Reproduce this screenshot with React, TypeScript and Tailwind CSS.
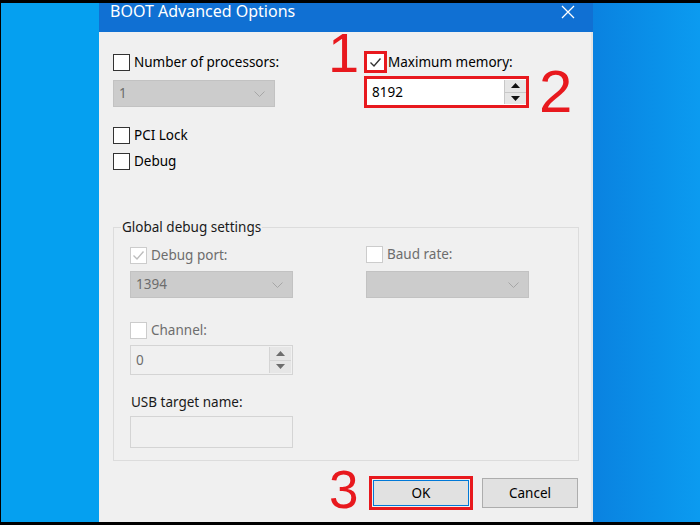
import type { ReactNode } from 'react';

const font = { fontFamily: '"Noto Sans", "Open Sans", sans-serif' };

const Check = ({ color }: { color: string }) => (
  <svg width="13" height="11" viewBox="0 0 13 11" fill="none">
    <path d="M1.5 5.5 L5 9 L11.5 1.5" stroke={color} strokeWidth="1.4" />
  </svg>
);

const Box = ({ checked, disabled }: { checked?: boolean; disabled?: boolean }) => (
  <div
    className={
      'w-[17px] h-[17px] shrink-0 flex items-center justify-center bg-white border ' +
      (disabled ? 'border-[#cccccc]' : 'border-[#333333]')
    }
  >
    {checked && <Check color={disabled ? '#bdbdbd' : '#333'} />}
  </div>
);

const CheckRow = ({ label, checked, disabled }: { label: string; checked?: boolean; disabled?: boolean }) => (
  <div className="flex items-center h-[17px]">
    <Box checked={checked} disabled={disabled} />
    <span className={'ml-[4px] text-[13.5px] leading-[17px] ' + (disabled ? 'text-[#6d6d6d]' : 'text-black')}>
      {label}
    </span>
  </div>
);

const Chevron = () => (
  <svg width="11" height="6" viewBox="0 0 11 6" fill="none">
    <path d="M0.5 0.5 L5.5 5.5 L10.5 0.5" stroke="#a6a6a6" strokeWidth="1" />
  </svg>
);

const Combo = ({ value, width }: { value: string; width: string }) => (
  <div className={width + ' h-[27px] bg-[#cccccc] border border-[#c2c2c2] flex items-center justify-between pl-[5px] pr-[9px]'}>
    <span className="text-[13.5px] text-[#6d6d6d]">{value}</span>
    <Chevron />
  </div>
);

const Arrow = ({ up, color }: { up?: boolean; color: string }) => (
  <svg width="9" height="5" viewBox="0 0 9 5">
    <path d={up ? 'M0 5 L4.5 0 L9 5 Z' : 'M0 0 L4.5 5 L9 0 Z'} fill={color} />
  </svg>
);

const Spin = ({ color, border }: { color: string; border: string }) => (
  <div className={'flex flex-col w-[22px] h-full border-l ' + border}>
    <div className={'flex-1 flex items-center justify-center bg-[#e6e6e6] border-b ' + border}>
      <Arrow up color={color} />
    </div>
    <div className="flex-1 flex items-center justify-center bg-[#e6e6e6]">
      <Arrow color={color} />
    </div>
  </div>
);

const Num = ({ children, className }: { children: ReactNode; className: string }) => (
  <div
    className={'absolute leading-none text-[#e8191e] ' + className}
    style={{ fontFamily: '"Liberation Sans", Arial, sans-serif' }}
  >
    {children}
  </div>
);

export default function App() {
  return (
    <div className="w-[700px] h-[525px] bg-black pt-[3px] pb-[3px] flex" style={font}>
      <div className="w-[98px] h-full bg-[#05a0f0] ml-[1px]" />
      <div className="w-[494px] h-full flex flex-col">
        <div className="h-[29px] bg-[#1070d3] flex items-start justify-between pl-[11px] pr-[18px]">
          <span className="text-white text-[16px] leading-none">BOOT Advanced Options</span>
          <svg className="mt-[2px]" width="14" height="14" viewBox="0 0 14 14" fill="none">
            <path d="M1 1 L13 13 M13 1 L1 13" stroke="white" strokeWidth="1.3" />
          </svg>
        </div>
        <div className="relative flex-1 bg-[#f0f0f0] border-r-2 border-[#e4e4e4] pl-[14px] flex flex-col">
          <Num className="text-[56px] left-[229px] top-[-7px]">1</Num>
          <Num className="text-[60px] left-[440px] top-[30px]">2</Num>
          <Num className="text-[53px] left-[230px] top-[431px]">3</Num>

          <div className="flex">
            <div className="w-[251px] flex flex-col">
              <div className="mt-[22px]">
                <CheckRow label="Number of processors:" />
              </div>
              <div className="mt-[9px]">
                <Combo value="1" width="w-[162px]" />
              </div>
              <div className="mt-[20px]">
                <CheckRow label="PCI Lock" />
              </div>
              <div className="mt-[9px]">
                <CheckRow label="Debug" />
              </div>
            </div>
            <div className="flex flex-col">
              <div className="mt-[19px] flex items-center">
                <div className="w-[23px] h-[22px] border-[3px] border-[#e8191e] bg-white flex items-center justify-center">
                  <Check color="#333" />
                </div>
                <span className="ml-[1px] text-[13.5px] text-black">Maximum memory:</span>
              </div>
              <div className="mt-[3px] w-[165px] h-[32px] border-[3px] border-[#e8191e] flex">
                <div className="flex-1 bg-white flex items-center pl-[5px] text-[13.5px] text-black">8192</div>
                <div className="bg-white py-[1px]">
                  <Spin color="#111" border="border-[#c8c8c8]" />
                </div>
              </div>
            </div>
          </div>

          <fieldset className="mt-[48px] w-[466px] border border-[#dcdcdc] pl-[16px] pb-[12px]">
            <legend className="-ml-[9px] px-[1px] text-[13.5px] leading-[18px] text-[#1a1a1a]">Global debug settings</legend>
            <div className="grid grid-cols-[236px_1fr]">
              <div className="flex flex-col">
                <div className="mt-[11px]">
                  <CheckRow label="Debug port:" checked disabled />
                </div>
                <div className="mt-[7px]">
                  <Combo value="1394" width="w-[163px]" />
                </div>
                <div className="mt-[24px]">
                  <CheckRow label="Channel:" disabled />
                </div>
                <div className="mt-[6px] w-[163px] h-[30px] border border-[#d4d4d4] bg-[#f0f0f0] flex">
                  <div className="flex-1 flex items-center pl-[5px] text-[13.5px] text-[#6d6d6d]">0</div>
                  <div className="py-[1px] pr-[1px]">
                    <Spin color="#6d6d6d" border="border-[#d4d4d4]" />
                  </div>
                </div>
                <div className="mt-[18px] text-[13.5px] leading-[19px] text-[#1a1a1a] pl-[1px]">USB target name:</div>
                <div className="mt-[4px] w-[163px] h-[32px] border border-[#d4d4d4] bg-[#f0f0f0]" />
              </div>
              <div className="flex flex-col">
                <div className="mt-[10px]">
                  <CheckRow label="Baud rate:" disabled />
                </div>
                <div className="mt-[8px]">
                  <Combo value="" width="w-[163px]" />
                </div>
              </div>
            </div>
          </fieldset>

          <div className="mt-[15px] flex justify-end pr-[13px] items-start">
            <div className="w-[104px] h-[34px] border-[3px] border-[#e8191e] p-[1px]">
              <div className="w-full h-full bg-[#e1e1e1] border border-[#0078d7] flex items-center justify-center text-[13.5px] text-black">
                OK
              </div>
            </div>
            <div className="ml-[9px] mt-[2px] w-[96px] h-[30px] bg-[#e1e1e1] border border-[#adadad] flex items-center justify-center text-[13.5px] text-black">
              Cancel
            </div>
          </div>
        </div>
      </div>
      <div className="flex-1 h-full bg-gradient-to-r from-[#0a82e0] to-[#0b9bf0]" />
    </div>
  );
}
